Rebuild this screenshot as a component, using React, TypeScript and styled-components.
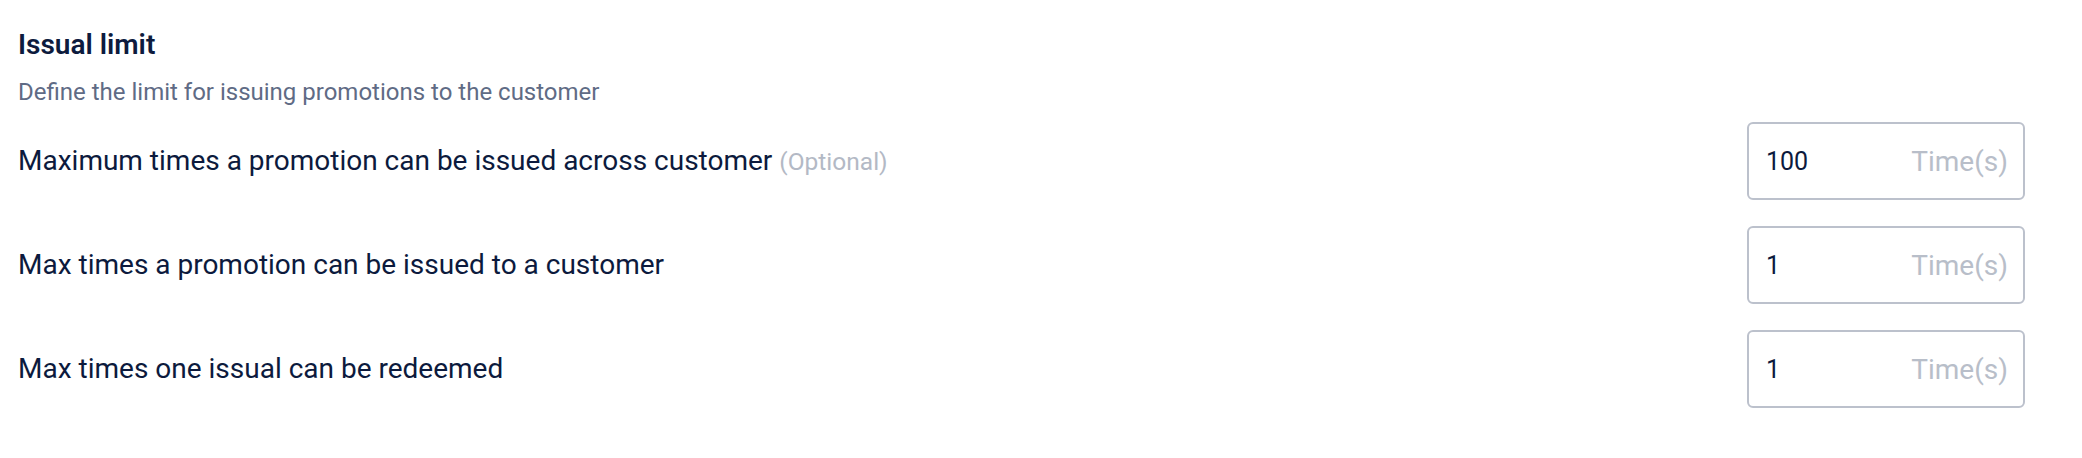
import React from "react";
import styled, { createGlobalStyle } from "styled-components";

const GlobalStyle = createGlobalStyle`
  html, body {
    margin: 0;
    padding: 0;
    background: #ffffff;
  }
  body {
    font-family: Roboto, "Noto Sans", "Liberation Sans", sans-serif;
    -webkit-font-smoothing: antialiased;
  }
`;

// === Section ===
const Section = styled.section`
  display: flex;
  flex-direction: column;
  padding: 28px 57px 40px 18px;
`;

const Title = styled.h2`
  margin: 0;
  font-size: 28px;
  line-height: 34px;
  font-weight: 600;
  color: #0d1b3e;
`;

const Subtitle = styled.p`
  margin: 16px 0 0;
  font-size: 24px;
  line-height: 28px;
  font-weight: 400;
  color: #5f6b85;
`;

const Rows = styled.div`
  display: flex;
  flex-direction: column;
  gap: 26px;
  margin-top: 16px;
`;

// === Row ===
const Row = styled.div`
  display: flex;
  align-items: center;
  justify-content: space-between;
  height: 78px;
`;

const Label = styled.span`
  font-size: 28px;
  line-height: 34px;
  color: #0c1a3d;
`;

const Optional = styled.span`
  margin-left: 7px;
  font-size: 24.5px;
  color: #b3b9c5;
`;

// === Input ===
const Field = styled.label`
  box-sizing: border-box;
  display: flex;
  align-items: center;
  width: 278px;
  height: 78px;
  padding: 0 15px 0 17px;
  border: 2px solid #bcc1cc;
  border-radius: 6px;
  background: #fff;
`;

const Input = styled.input`
  flex: 1;
  min-width: 0;
  border: none;
  outline: none;
  padding: 0;
  background: transparent;
  font-family: inherit;
  font-size: 25px;
  color: #0c1a3d;
`;

const Suffix = styled.span`
  font-size: 28px;
  color: #b8bec9;
`;

interface LimitRowProps {
  label: string;
  value: string;
  optional?: boolean;
}

const LimitRow = ({ label, value, optional }: LimitRowProps) => (
  <Row>
    <Label>
      {label}
      {optional && <Optional>(Optional)</Optional>}
    </Label>
    <Field>
      <Input defaultValue={value} />
      <Suffix>Time(s)</Suffix>
    </Field>
  </Row>
);

const rows: LimitRowProps[] = [
  { label: "Maximum times a promotion can be issued across customer", value: "100", optional: true },
  { label: "Max times a promotion can be issued to a customer", value: "1" },
  { label: "Max times one issual can be redeemed", value: "1" },
];

export default function App() {
  return (
    <>
      <GlobalStyle />
      <Section>
        <Title>Issual limit</Title>
        <Subtitle>Define the limit for issuing promotions to the customer</Subtitle>
        <Rows>
          {rows.map((r) => (
            <LimitRow key={r.label} {...r} />
          ))}
        </Rows>
      </Section>
    </>
  );
}
